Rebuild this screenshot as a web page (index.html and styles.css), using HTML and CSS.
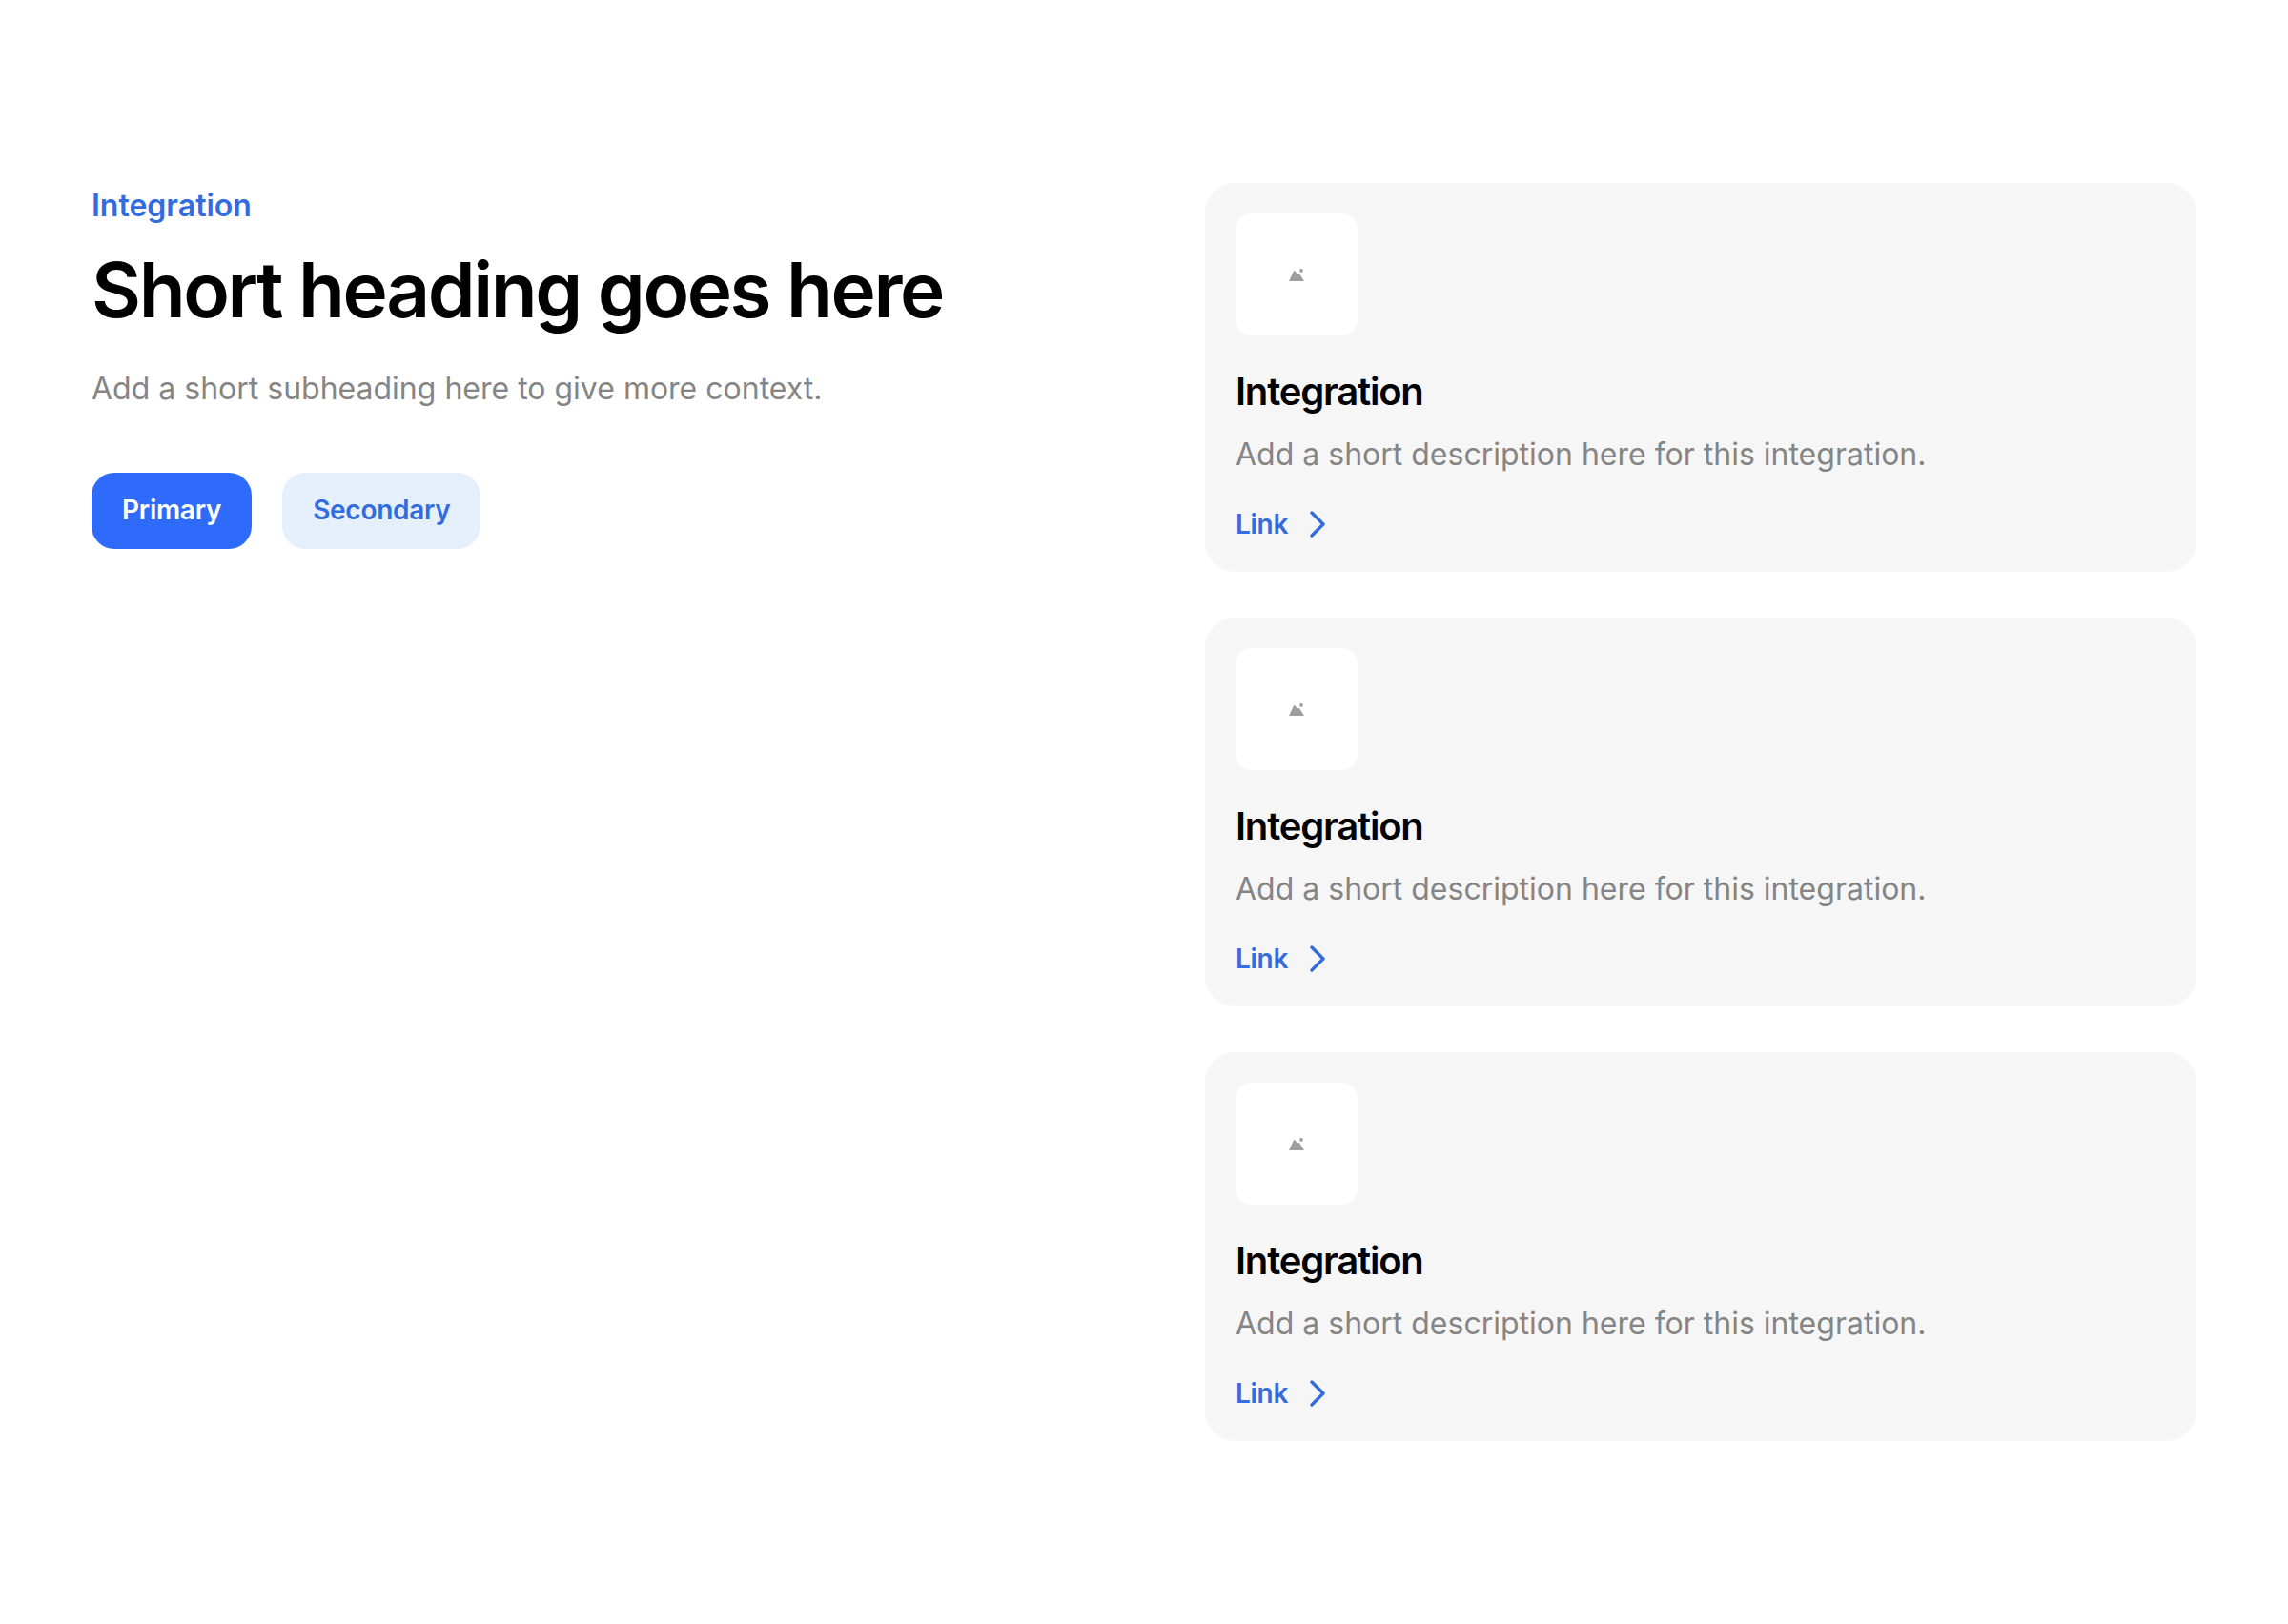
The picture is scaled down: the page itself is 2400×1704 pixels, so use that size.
FILE: index.html
```html
<!DOCTYPE html>
<html lang="en">
<head>
<meta charset="utf-8">
<title>Integration</title>
<link rel="stylesheet" href="styles.css">
</head>
<body>
<main class="page">
  <section class="intro">
    <p class="eyebrow">Integration</p>
    <h1 class="heading">Short heading goes here</h1>
    <p class="subheading">Add a short subheading here to give more context.</p>
    <div class="actions">
      <a class="btn btn-primary">Primary</a>
      <a class="btn btn-secondary">Secondary</a>
    </div>
  </section>
  <section class="cards">
    <article class="card">
      <div class="thumb"><svg class="thumb-icon" viewBox="0 0 16 13"><path d="M0 13 L5 2.6 Q5.8 1.4 6.6 2.6 L8.8 5.8 L9.6 5 Q10.3 4.4 11 5 L16 13 Z"/><circle cx="13" cy="1.9" r="1.9"/></svg></div>
      <h2 class="card-title">Integration</h2>
      <p class="card-desc">Add a short description here for this integration.</p>
      <a class="link">Link <svg class="chevron" viewBox="0 0 16 28"><path d="M2 2 L14 14 L2 26"/></svg></a>
    </article>
    <article class="card">
      <div class="thumb"><svg class="thumb-icon" viewBox="0 0 16 13"><path d="M0 13 L5 2.6 Q5.8 1.4 6.6 2.6 L8.8 5.8 L9.6 5 Q10.3 4.4 11 5 L16 13 Z"/><circle cx="13" cy="1.9" r="1.9"/></svg></div>
      <h2 class="card-title">Integration</h2>
      <p class="card-desc">Add a short description here for this integration.</p>
      <a class="link">Link <svg class="chevron" viewBox="0 0 16 28"><path d="M2 2 L14 14 L2 26"/></svg></a>
    </article>
    <article class="card">
      <div class="thumb"><svg class="thumb-icon" viewBox="0 0 16 13"><path d="M0 13 L5 2.6 Q5.8 1.4 6.6 2.6 L8.8 5.8 L9.6 5 Q10.3 4.4 11 5 L16 13 Z"/><circle cx="13" cy="1.9" r="1.9"/></svg></div>
      <h2 class="card-title">Integration</h2>
      <p class="card-desc">Add a short description here for this integration.</p>
      <a class="link">Link <svg class="chevron" viewBox="0 0 16 28"><path d="M2 2 L14 14 L2 26"/></svg></a>
    </article>
  </section>
</main>
</body>
</html>
```
FILE: styles.css
```css
* { box-sizing: border-box; }
html, body { margin: 0; padding: 0; background: #fff; }
body { font-family: Inter, "Liberation Sans", sans-serif; }
p, h1, h2 { margin: 0; }
.page {
  display: grid;
  grid-template-columns: 1040px 1040px;
  column-gap: 128px;
  align-items: start;
  padding: 192px 96px;
}
.intro { display: flex; flex-direction: column; align-items: flex-start; }
.eyebrow { font-size: 32px; line-height: 48px; font-weight: 600; color: #326cdf; }
.heading { margin-top: 16px; font-size: 80px; line-height: 96px; font-weight: 600; letter-spacing: -2.4px; color: #000; }
.subheading { margin-top: 32px; font-size: 32px; line-height: 48px; color: #858585; }
.actions { display: flex; gap: 32px; margin-top: 64px; }
.btn { display: flex; align-items: center; height: 80px; padding: 0 32px 2px; border-radius: 24px; font-size: 28px; font-weight: 600; letter-spacing: -0.28px; }
.btn-primary { background: #2f6bfa; color: #fff; }
.btn-secondary { background: #e6f0fd; color: #326cdf; }
.cards { display: flex; flex-direction: column; gap: 48px; }
.card { height: 408px; padding: 32px 32px 0; border-radius: 32px; background: #f6f6f6; display: flex; flex-direction: column; align-items: flex-start; }
.thumb { flex: none; width: 128px; height: 128px; border-radius: 16px; background: #fff; display: flex; align-items: center; justify-content: center; }
.thumb-icon { width: 16px; height: 13px; fill: #9e9e9e; }
.card-title { margin-top: 31px; font-size: 40px; line-height: 56px; font-weight: 600; letter-spacing: -1.2px; color: #000; }
.card-desc { margin-top: 14px; font-size: 32px; line-height: 48px; color: #858585; }
.link { margin-top: 29px; display: flex; align-items: center; gap: 23px; font-size: 28px; line-height: 40px; font-weight: 600; letter-spacing: -0.28px; color: #326cdf; }
.chevron { width: 16px; height: 28px; fill: none; stroke: #326cdf; stroke-width: 3.4; stroke-linecap: round; stroke-linejoin: round; }
```
